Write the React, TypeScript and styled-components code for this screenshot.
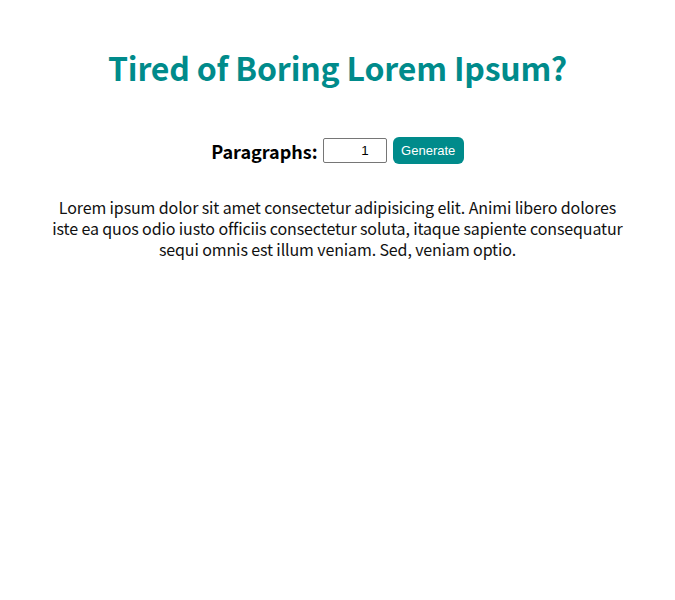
import React, { useState } from "react";
import styled, { createGlobalStyle } from "styled-components";

const GlobalStyle = createGlobalStyle`
  body {
    margin: 8px;
    background: #ffffff;
    font-family: "Noto Sans CJK KR", "Noto Sans", sans-serif;
    color: #000000;
  }
`;

const Page = styled.main`
  display: flex;
  flex-direction: column;
  align-items: center;
  text-align: center;
`;

const Title = styled.h1`
  margin: 35px 0 0;
  font-size: 32px;
  line-height: 48px;
  font-weight: 700;
  letter-spacing: -0.16px;
  color: #008b8b;
`;

const Form = styled.form`
  display: flex;
  align-items: center;
  gap: 5px;
  margin-top: 46px;
`;

const Label = styled.label`
  font-size: 18px;
  font-weight: 700;
  line-height: 26px;
`;

const NumberInput = styled.input`
  box-sizing: border-box;
  width: 64px;
  height: 25px;
  margin: 0;
  padding: 1px 2px;
  border: 1px solid #767676;
  border-radius: 2px;
  font-family: "Liberation Sans", Arial, sans-serif;
  font-size: 13.33px;
  text-align: right;
  color: #000000;
`;

const GenerateButton = styled.button`
  box-sizing: border-box;
  height: 27px;
  margin-left: 1px;
  padding: 0 8.5px;
  border: none;
  border-radius: 6px;
  background: #008b8b;
  color: #ffffff;
  font-family: "Liberation Sans", Arial, sans-serif;
  font-size: 13px;
  cursor: pointer;
`;

const Body = styled.p`
  max-width: 580px;
  margin: 33px 0 0;
  font-size: 16px;
  line-height: 21px;
  letter-spacing: -0.12px;
  color: #111111;
`;

export default function App() {
  const [count, setCount] = useState("1");
  return (
    <>
      <GlobalStyle />
      <Page>
        <Title>Tired of Boring Lorem Ipsum?</Title>
        <Form onSubmit={(e) => e.preventDefault()}>
          <Label htmlFor="amount">Paragraphs:</Label>
          <NumberInput
            id="amount"
            type="number"
            value={count}
            onChange={(e) => setCount(e.target.value)}
          />
          <GenerateButton type="submit">Generate</GenerateButton>
        </Form>
        <Body>
          Lorem ipsum dolor sit amet consectetur adipisicing elit. Animi libero dolores
          iste ea quos odio iusto officiis consectetur soluta, itaque sapiente consequatur
          sequi omnis est illum veniam. Sed, veniam optio.
        </Body>
      </Page>
    </>
  );
}
